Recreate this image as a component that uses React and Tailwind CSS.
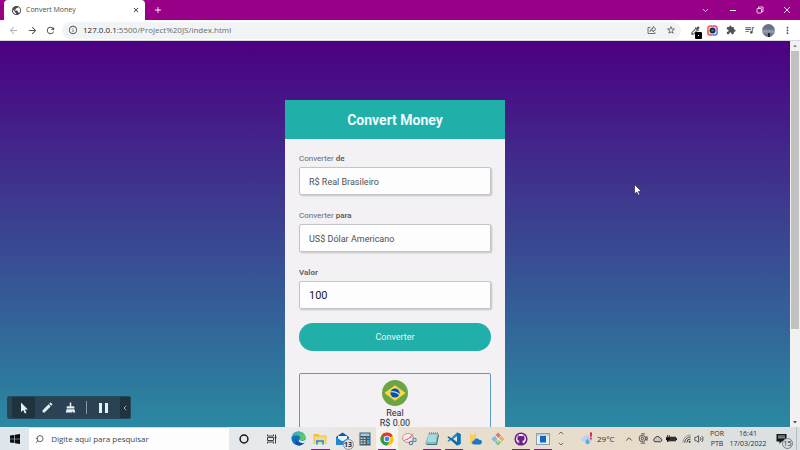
import React from "react";
import {
  MdAdd, MdArrowBack, MdArrowForward, MdClose, MdColorize, MdEdit, MdExtension,
  MdInfoOutline, MdMoreVert, MdPublic, MdQueueMusic, MdRefresh, MdStarBorder,
} from "react-icons/md";
import { ChevronDown, ChevronUp, ChevronLeft, Search, Volume2 } from "lucide-react";

const iconButton = "flex shrink-0 items-center justify-center";

function TitleBar() {
  return (
    <div className="flex h-5 shrink-0 items-center bg-[#980088] text-white">
      <div className="ml-1 flex h-5 w-[141px] items-center rounded-t-[4px] bg-white pr-[5px] pl-[7px] text-[#4a4d51]">
        <MdPublic className="size-[11px]" />
        <span className="ml-1 flex-1 text-[7px] leading-3 text-[#4a4d51]">Convert Money</span>
        <button aria-label="Fechar guia" className={iconButton}>
          <MdClose className="size-2 text-[#222222]" />
        </button>
      </div>
      <button aria-label="Nova guia" className={`${iconButton} ml-2`}>
        <MdAdd className="size-[10px]" />
      </button>
      <div className="ml-auto flex items-center">
        <button aria-label="Pesquisar guias" className={`${iconButton} w-[27px]`}>
          <ChevronDown className="size-[9px]" strokeWidth={2} />
        </button>
        <button aria-label="Minimizar" className={`${iconButton} w-[27px]`}>
          <span className="h-px w-1.5 bg-white" />
        </button>
        <button aria-label="Restaurar" className={`${iconButton} w-[27px]`}>
          <svg viewBox="0 0 8 8" className="size-2" fill="none" stroke="white" strokeWidth="0.8">
            <rect x="1" y="2.5" width="4.5" height="4.5" rx="0.6" />
            <path d="M2.5 2.5V1h4.500v4.500H5.500" />
          </svg>
        </button>
        <button aria-label="Fechar" className={`${iconButton} w-[27px]`}>
          <svg viewBox="0 0 8 8" className="size-2" stroke="white" strokeWidth="0.9">
            <path d="M1 1l6 6M7 1L1 7" />
          </svg>
        </button>
      </div>
    </div>
  );
}

function Toolbar() {
  return (
    <div className="flex h-[21px] shrink-0 items-center border-b border-[#d5d7da] bg-white pr-[7px] pl-[7px] text-[#505458]">
      <button aria-label="Voltar" className={`${iconButton} w-3`}>
        <MdArrowBack className="size-[11px] text-[#b0b3b6]" />
      </button>
      <button aria-label="Avançar" className={`${iconButton} ml-[7px] w-3`}>
        <MdArrowForward className="size-[11px]" />
      </button>
      <button aria-label="Recarregar" className={`${iconButton} ml-1.5 w-3`}>
        <MdRefresh className="size-[11px]" />
      </button>
      <div className="ml-1.5 flex h-[17px] min-w-0 flex-1 items-center rounded-full bg-[#f1f3f4] pr-[5px] pl-1.5">
        <MdInfoOutline className="size-[10px] shrink-0" />
        <span className="ml-[5px] flex-1 text-[8px] leading-3 text-[#686c70]">
          <span className="text-[#26282b]">127.0.0.1</span>:5500/Project%20JS/index.html
        </span>
        <button aria-label="Compartilhar" className={iconButton}>
          <svg viewBox="0 0 10 10" className="size-[10px]" fill="none" stroke="currentColor" strokeWidth="0.8">
            <path d="M3.500 2.500H1v6h7V7.200" />
            <path d="M3 6.500C3.300 4.500 4.500 3.500 6 3.400V1.500L9 4.200 6 6.800V5C4.800 5 3.800 5.400 3 6.500z" />
          </svg>
        </button>
        <button aria-label="Adicionar aos favoritos" className={`${iconButton} ml-[9px]`}>
          <MdStarBorder className="size-[10px]" />
        </button>
      </div>
      <button aria-label="Seletor de cores" className={`${iconButton} relative ml-2 w-[13px]`}>
        <MdColorize className="size-[11px]" />
        <span className="absolute right-0 -bottom-[3px] flex size-[7px] items-center justify-center rounded-[1px] bg-black">
          <span className="size-px bg-white" />
        </span>
      </button>
      <button aria-label="Captura" className={`${iconButton} ml-[5px] w-[11px]`}>
        <svg viewBox="0 0 12 12" className="size-[11px]">
          <rect x="1" y="1" width="10" height="10" rx="2.500" fill="#e9dff0" />
          <path d="M1 5V3.500A2.500 2.500 0 0 1 3.500 1H6" stroke="#ee5a32" strokeWidth="1.600" fill="none" />
          <path d="M6 1h2.500A2.500 2.500 0 0 1 11 3.500V6" stroke="#e13fa5" strokeWidth="1.600" fill="none" />
          <path d="M11 6v2.500A2.500 2.500 0 0 1 8.500 11H6" stroke="#3b8be9" strokeWidth="1.600" fill="none" />
          <path d="M6 11H3.500A2.500 2.500 0 0 1 1 8.500V5" stroke="#e9533b" strokeWidth="1.600" fill="none" />
          <circle cx="6" cy="6" r="3.300" fill="#1e2f45" />
          <circle cx="6" cy="6" r="1.200" fill="#4b78ac" />
        </svg>
      </button>
      <button aria-label="Extensões" className={`${iconButton} ml-2 w-[10px]`}>
        <MdExtension className="size-[10px]" />
      </button>
      <button aria-label="Controles de mídia" className={`${iconButton} ml-2 w-[11px]`}>
        <MdQueueMusic className="size-3" />
      </button>
      <button aria-label="Perfil" className={`${iconButton} ml-[7px]`}>
        <span className="flex size-[13px] flex-col items-center justify-end rounded-full bg-linear-to-b from-[#6b7085] from-35% via-[#92a0b6] via-55% to-[#5a6270]">
          <span className="h-1 w-0.5 bg-[#24262c]" />
        </span>
      </button>
      <button aria-label="Menu" className={`${iconButton} ml-[7px]`}>
        <MdMoreVert className="size-[11px]" />
      </button>
    </div>
  );
}

const fieldClass =
  "block h-7 w-full appearance-none rounded-[2px] border border-[#c3c5c8] bg-[#fdfdfd] px-[9px] shadow-[1px_1px_2px_rgba(0,0,0,0.2)] outline-none";
const selectClass = `${fieldClass} pt-[3px] text-[9px] text-[#505153]`;
const labelClass = "block text-[8px] leading-4 text-[#66676a]";

function BrazilFlag() {
  return (
    <svg viewBox="0 0 26 26" className="size-[26px]" role="img" aria-label="Brasil">
      <circle cx="13" cy="13" r="13" fill="#6da544" />
      <path d="M13 5.200L23.500 13 13 20.800 2.500 13z" fill="#ffda44" />
      <circle cx="13" cy="13" r="4.600" fill="#0052b4" />
      <path d="M8.700 11.500c3.300-.8 6.700.2 8.800 2.700l-.4 1.100c-2-2.600-5.400-3.700-8.700-2.800z" fill="#f0f0f0" />
    </svg>
  );
}

function Converter() {
  return (
    <section className="mt-[59px] w-[220px] shrink-0 bg-[#f3f1f4]">
      <h1 className="flex h-[39px] items-center justify-center bg-[#20afa9] pt-px text-[14px] font-bold text-[#eefaf9]">
        Convert Money
      </h1>
      <form className="px-3.5 pt-3" onSubmit={(e) => e.preventDefault()}>
        <label htmlFor="from" className={labelClass}>
          Converter <b>de</b>
        </label>
        <select id="from" className={selectClass}>
          <option>R$ Real Brasileiro</option>
        </select>
        <label htmlFor="to" className={`${labelClass} mt-[13px]`}>
          Converter <b>para</b>
        </label>
        <select id="to" className={selectClass}>
          <option>US$ Dólar Americano</option>
        </select>
        <label htmlFor="amount" className={`${labelClass} mt-[13px] font-bold`}>
          Valor
        </label>
        <input id="amount" defaultValue="100" className={`${fieldClass} text-[11px] text-[#222222]`} />
        <button className="mt-3.5 block h-7 w-full rounded-full bg-[#20afa9] pt-0.5 text-[9px] text-[#e6f7f6]">
          Converter
        </button>
      </form>
      <div className="mx-3.5 mt-[22px] flex h-24 flex-col items-center rounded-[2px] border border-[#5a9cc0] pt-1.5 text-[9px] leading-[10px] text-[#2b2b2d]">
        <BrazilFlag />
        <p className="mt-0.5">Real</p>
        <p>R$ 0.00</p>
      </div>
    </section>
  );
}

function RecorderBar() {
  return (
    <div className="absolute bottom-2 left-[7px] flex h-[23px] items-stretch overflow-hidden rounded-[2px] border border-[#25495a] bg-[#2b4254] text-[#e6eff3]">
      <button aria-label="Cursor" className={`${iconButton} ml-1 w-[23px] bg-[#1e333d]`}>
        <svg viewBox="0 0 12 12" className="size-3" fill="currentColor">
          <path d="M3 0.500v9.500l2.200-2 1.600 3.500 1.700-.8-1.600-3.300h3z" />
        </svg>
      </button>
      <button aria-label="Caneta" className={`${iconButton} w-6`}>
        <MdEdit className="size-[13px]" />
      </button>
      <button aria-label="Limpar" className={`${iconButton} w-[23px]`}>
        <svg viewBox="0 0 12 12" className="size-[11px]" fill="currentColor">
          <path d="M5.200.5h1.600v4h2.400c.6 0 1 .4 1 1V7H1.800V5.500c0-.6.4-1 1-1h2.400zM1.700 7.800h8.600l.9 3.700H8.500L8 9.800l-.3 1.700H.8z" />
        </svg>
      </button>
      <span className="mx-1 my-1 w-px self-stretch bg-[#8b9aa4]" />
      <button aria-label="Pausar" className={`${iconButton} w-6 gap-[3px]`}>
        <span className="h-[10px] w-[3px] bg-[#e6eff3]" />
        <span className="h-[10px] w-[3px] bg-[#e6eff3]" />
      </button>
      <button aria-label="Recolher" className={`${iconButton} ml-[5px] w-[10px] bg-[#1e333d]`}>
        <ChevronLeft className="size-2" />
      </button>
    </div>
  );
}

function ScrollBar() {
  return (
    <div className="flex w-[10px] shrink-0 flex-col items-center bg-[#f1f1f1]">
      <svg viewBox="0 0 10 10" className="size-[10px]"><path d="M3 6l2-2.500L7 6z" fill="#8a8a8a" /></svg>
      <div className="h-[72%] w-2 bg-[#c1c1c1]" />
      <svg viewBox="0 0 10 10" className="mt-auto size-[10px]"><path d="M3 4l2 2.500L7 4z" fill="#505050" /></svg>
    </div>
  );
}

function EdgeIcon() {
  return (
    <svg viewBox="0 0 16 16" className="size-[15px]">
      <defs>
        <linearGradient id="edgeTop" x1="0" y1="0" x2="1" y2="0.500">
          <stop offset="0" stopColor="#2aa5df" />
          <stop offset="1" stopColor="#5fcf5a" />
        </linearGradient>
      </defs>
      <circle cx="8" cy="8" r="7.500" fill="#176fbf" />
      <path d="M.6 7.500C1 3.500 4.200.5 8 .5c4.400 0 7.500 3 7.500 6.200 0 2.200-1.600 3.600-3.800 3.600-1.600 0-2.400-.6-2.400-1.200 0-.5.6-.7.6-1.800C9.900 5.700 8 4.600 5.800 4.600 3.300 4.600 1.300 6 .6 7.500z" fill="url(#edgeTop)" />
      <path d="M6 6.700c-1.500 2.600.3 6.400 4.600 6.400 1.700 0 3-.7 3.700-1.500.3.300-1.600 3.900-6.300 3.900-2.900-.8-4.800-5.800-2-8.800z" fill="#124a91" />
      <path d="M9.400 9.100c0 1 1.400 1.800 3.200 1.500 1-.2 1.800-.6 2.400-1.300l.5 1.200-1.400 1.900c-2.700 1.100-5.500-.3-5.700-2.600z" fill="#e9edf0" />
    </svg>
  );
}

function ExplorerIcon() {
  return (
    <svg viewBox="0 0 14 14" className="size-[14px]">
      <path d="M.5 2h5l1 1.500h7V12H.5z" fill="#f2bd42" />
      <path d="M1.500 4.500h11V12h-11z" fill="#fbd979" />
      <path d="M3 8h8v4.500H9V10H5v2.500H3z" fill="#3f9ee0" />
    </svg>
  );
}

function MailIcon() {
  return (
    <span className="relative flex">
      <svg viewBox="0 0 16 14" className="h-[14px] w-4">
        <path d="M1 5l6.500-4.500L14 5v8H1z" fill="#155a9c" />
        <path d="M3 4h9v5H3z" fill="#eaf5fc" />
        <path d="M1 5l6.500 4.500L14 5v8H1z" fill="#2586d6" />
      </svg>
      <span className="absolute -right-[3px] -bottom-1 flex size-[11px] items-center justify-center rounded-full border border-[#8d9297] bg-[#dfe2e4] text-[7px] leading-none font-bold text-[#303338]">13</span>
    </span>
  );
}

function CalculatorIcon() {
  return (
    <svg viewBox="0 0 12 14" className="h-[14px] w-3">
      <rect x=".5" y=".5" width="11" height="13" fill="#465b68" />
      <rect x="1.500" y="1.500" width="9" height="2.500" fill="#8fd0ec" />
      <g fill="#c5d3da">
        <path d="M1.500 5.500h2V7h-2zM4.500 5.500h2V7h-2zM1.500 8h2v1.500h-2zM4.500 8h2v1.500h-2zM1.500 10.500h2V12h-2zM4.500 10.500h2V12h-2z" />
      </g>
      <path d="M8 5.500h2.500V7H8zM8 8h2.500v4H8z" fill="#3fa6db" />
    </svg>
  );
}

function ChromeIcon() {
  return (
    <svg viewBox="0 0 16 16" className="size-[14px]">
      <circle cx="8" cy="8" r="7.500" fill="#fbc116" />
      <path d="M8 8L1.500 4.250A7.500 7.500 0 0 1 14.500 4.250z" fill="#e33b2e" />
      <path d="M1.500 4.250A7.500 7.500 0 0 0 8 15.500l3.250-5.600L8 8z" fill="#2a9d48" />
      <circle cx="8" cy="8" r="3.700" fill="#fff" />
      <circle cx="8" cy="8" r="2.800" fill="#4285f4" />
    </svg>
  );
}

function SnipIcon() {
  return (
    <svg viewBox="0 0 16 14" className="h-[14px] w-4" fill="none">
      <ellipse cx="7" cy="6" rx="5.500" ry="4.500" fill="#f5ecec" stroke="#db8d8d" strokeWidth="1" />
      <path d="M12.500 1.500L6 8M3 8.500l9-4" stroke="#c7777a" strokeWidth="0.900" />
      <circle cx="10" cy="11" r="1.700" stroke="#5186b7" strokeWidth="1.100" />
      <circle cx="13.500" cy="8" r="1.700" stroke="#5186b7" strokeWidth="1.100" />
    </svg>
  );
}

function NotepadIcon() {
  return (
    <svg viewBox="0 0 16 14" className="h-[14px] w-4">
      <path d="M5 1h9l-2 11H1z" fill="#7fbcc5" />
      <path d="M5 2.500h8L11.500 10H3z" fill="#a8dae0" />
      <path d="M14 2l1 1-2 10H3l-1-1h10z" fill="#40747e" />
      <path d="M5 1h9" stroke="#4d6c73" strokeWidth="1" strokeDasharray="1 1" />
    </svg>
  );
}

function CodeIcon() {
  return (
    <svg viewBox="0 0 16 16" className="size-[14px]">
      <path d="M11.500.5L15.500 2.300v11.400l-4 1.800L4.500 9 2 11 .5 10.200 3 8 .5 5.800 2 5l2.500 2z" fill="#2489ca" />
      <path d="M11.500 4.500v7L7 8z" fill="#ebe4da" />
      <path d="M11.500.5L15.500 2.300v11.400l-4 1.800z" fill="#1070b3" />
      <path d="M.5 5.800L2 5l9.500 7v3.500z" fill="#0e66a8" />
    </svg>
  );
}

function CloudFileIcon() {
  return (
    <svg viewBox="0 0 14 14" className="size-[14px]">
      <path d="M1 1h6v11H1z" fill="#f7cf61" />
      <path d="M2 1h3v1.500H2z" fill="#fae9b2" />
      <path d="M5 12.500a2 2 0 0 1 .2-4 2.700 2.700 0 0 1 5-.6 2.300 2.300 0 0 1 .8 4.600z" fill="#1878cc" />
    </svg>
  );
}

function GitIcon() {
  return (
    <svg viewBox="0 0 14 14" className="size-[14px]">
      <path d="M7 .5l3 3-3 3-3-3z" fill="#e07b6b" />
      <path d="M3.500 4l3 3-3 3-3-3z" fill="#83b9d9" />
      <path d="M10.500 4l3 3-3 3-3-3z" fill="#e5b460" />
      <path d="M7 7.500l3 3-3 3-3-3z" fill="#87bd73" />
      <path d="M4.500 3.500L10 9M7 6v5" stroke="#f3efe9" strokeWidth="0.9" />
    </svg>
  );
}

function OctocatIcon() {
  return (
    <svg viewBox="0 0 16 16" className="size-[14px]">
      <circle cx="8" cy="8" r="7.500" fill="#6b1f8a" />
      <circle cx="8" cy="8" r="5.700" fill="#f4eef6" />
      <path d="M4.500 3.800l2 1c1-.3 2-.3 3 0l2-1c.3.800.3 1.500.1 2 1 1.400.8 4-2.100 4.600.4.500.5 1 .5 1.600v2.300H6V12c-1.200.2-1.800-.2-2.300-1.200.8.200 1.400.600 2.300.2 0-.2.200-.4.500-.6-2.900-.6-3.100-3.200-2.100-4.600-.2-.5-.2-1.200.1-2z" fill="#6b1f8a" />
    </svg>
  );
}

function WindowIcon() {
  return (
    <svg viewBox="0 0 14 12" className="h-3 w-[14px]">
      <rect x=".5" y=".5" width="13" height="11" fill="#e8eef2" stroke="#8ba0ac" />
      <rect x="4" y="3" width="6" height="6.500" fill="#1665c1" />
      <path d="M1 2h12" stroke="#9db5c3" strokeWidth="1" />
    </svg>
  );
}

const apps = [
  { name: "Edge", icon: <EdgeIcon /> },
  { name: "Explorador", icon: <ExplorerIcon />, open: true },
  { name: "Email", icon: <MailIcon /> },
  { name: "Calculadora", icon: <CalculatorIcon /> },
  { name: "Chrome", icon: <ChromeIcon />, open: true, active: true },
  { name: "Captura", icon: <SnipIcon /> },
  { name: "Bloco de notas", icon: <NotepadIcon />, open: true },
  { name: "Code", icon: <CodeIcon />, open: true },
  { name: "Nuvem", icon: <CloudFileIcon /> },
  { name: "Git", icon: <GitIcon /> },
  { name: "GitHub", icon: <OctocatIcon />, open: true },
  { name: "Gravador", icon: <WindowIcon />, open: true },
];

function SystemTray() {
  return (
    <div className="flex items-center text-[#2d2f31]">
      <svg viewBox="0 0 14 14" className="size-[13px]">
        <path d="M3 10.500a2.500 2.500 0 0 1 .2-5A3.300 3.300 0 0 1 9.500 5a2.800 2.800 0 0 1 .5 5.500z" fill="#b5d3ec" />
        <path d="M7 7l2 3a2.200 2.200 0 1 1-4 0z" fill="#60a6e0" />
        <path d="M9.500.5h2.400l-.5 5h-1.400z" fill="#c7203c" />
        <circle cx="10.700" cy="7" r="1" fill="#c7203c" />
      </svg>
      <span className="ml-[3px] w-[19px] text-[8px] leading-3 whitespace-nowrap">29°C</span>
      <button aria-label="Ícones ocultos" className={`${iconButton} ml-1.5 w-[14px]`}>
        <ChevronUp className="size-[10px]" />
      </button>
      <span className="flex w-[14px] justify-center">
        <svg viewBox="0 0 10 12" className="h-[11px] w-[10px]" fill="none" stroke="currentColor" strokeWidth="0.9">
          <path d="M3 1h4M2.500 11h5" />
          <rect x="1" y="3" width="6.500" height="6" rx="2" />
          <circle cx="4.300" cy="6" r="1.300" />
          <path d="M7.500 5.500L9.500 4v4L7.500 6.500" />
        </svg>
      </span>
      <span className="flex w-[14px] justify-center">
        <svg viewBox="0 0 12 8" className="h-2 w-[11px]" fill="#c9c5be" stroke="currentColor" strokeWidth="1">
          <path d="M3 7a2.200 2.200 0 0 1 .2-4 3.200 3.200 0 0 1 5.800.2A2 2 0 0 1 9.500 7z" />
        </svg>
      </span>
      <span className="flex w-[15px] justify-center">
        <svg viewBox="0 0 12 8" className="h-2 w-[11px]">
          <path d="M3 1.500h8v5H3z" fill="#333" />
          <path d="M11 3h1v2h-1zM0 2h4v3H3v2H1V5H0z" fill="#111" />
          <path d="M1 0h1v2H1zM3 0h1v2H3z" fill="#111" />
        </svg>
      </span>
      <span className="flex w-[14px] justify-center">
        <svg viewBox="0 0 10 10" className="size-[9px]" fill="none" stroke="currentColor" strokeWidth="1">
          <path d="M1 9.500A8.500 8.500 0 0 1 9.500 1" stroke="#8d8b86" />
          <path d="M3 9.500A6.500 6.500 0 0 1 9.500 3.200M5.300 9.500A4.200 4.200 0 0 1 9.500 5.500" />
          <circle cx="8.500" cy="8.700" r="0.700" fill="currentColor" />
        </svg>
      </span>
      <span className="flex w-3 justify-center"><Volume2 className="size-[10px]" /></span>
      <div className="flex w-6 flex-col text-center text-[7px] leading-[10px]">
        <span>POR</span>
        <span>PTB</span>
      </div>
      <div className="flex w-[38px] flex-col text-center text-[7px] leading-[10px] whitespace-nowrap">
        <span>16:41</span>
        <span>17/03/2022</span>
      </div>
      <button aria-label="Notificações" className={`${iconButton} relative ml-2 w-[14px]`}>
        <svg viewBox="0 0 12 12" className="size-3">
          <path d="M.5 1h10v7.500h-5L3.500 11V8.500h-3z" fill="#141517" />
          <path d="M2 3h7M2 4.800h7" stroke="#dfe3e5" strokeWidth="0.800" />
        </svg>
        <span className="absolute -right-1 -bottom-1 flex size-[11px] items-center justify-center rounded-full border border-[#777b7f] bg-[#d9dcde] text-[7px] leading-none text-[#26282b]">15</span>
      </button>
      <span className="ml-[7px] h-[23px] w-px bg-[#b6bcc0]" />
      <span className="w-[3px]" />
    </div>
  );
}

function Taskbar() {
  return (
    <footer className="flex h-[23px] shrink-0 items-stretch bg-linear-[to_right,#dfe6ec_0%,#e8e9ea_40%,#e8dfd0_54%,#e7dcca_80%,#dbe1e3_93%]">
      <button aria-label="Iniciar" className={`${iconButton} w-[29px]`}>
        <svg viewBox="0 0 10 10" className="size-[10px]" fill="#0c0d0e">
          <path d="M0 1.500l4.300-.6v3.800H0zM4.900.8L10 0v4.700H4.900zM0 5.300h4.300v3.800L0 8.500zM4.900 5.300H10V10l-5.100-.8z" />
        </svg>
      </button>
      <label className="flex w-[200px] items-center border-t border-[#d9d9d9] bg-[#fdfdfd] pl-1.5">
        <Search className="size-[10px] -scale-x-100 text-[#333]" />
        <input
          aria-label="Pesquisar"
          placeholder="Digite aqui para pesquisar"
          className="ml-[7px] w-full min-w-0 bg-transparent text-[8px] leading-3 text-[#444] outline-none placeholder:text-[#444648]"
        />
      </label>
      <button aria-label="Cortana" className={`${iconButton} w-[29px]`}>
        <svg viewBox="0 0 10 10" className="size-[10px]">
          <circle cx="5" cy="5" r="3.900" fill="none" stroke="#161718" strokeWidth="1.500" />
        </svg>
      </button>
      <button aria-label="Visão de tarefas" className={`${iconButton} w-[27px]`}>
        <svg viewBox="0 0 10 10" className="size-[10px]" fill="none" stroke="#2b2d2f" strokeWidth="0.9">
          <path d="M.5.500v1.500h6V.5M.5 9.500V8h6v1.500M.5 3.500h6v3h-6zM8.500.5v9" />
          <path d="M7.700 3.500h1.800" strokeWidth="1.600" />
        </svg>
      </button>
      <nav className="ml-0.5 grid w-[267px] grid-cols-12">
        {apps.map((app) => (
          <button
            key={app.name}
            aria-label={app.name}
            className={`relative flex items-center justify-center ${app.active ? "bg-[#f6f3ef]" : ""}`}
          >
            {app.icon}
            {app.open && <span className="absolute inset-x-[2px] bottom-0 h-px bg-[#8c1a80]" />}
          </button>
        ))}
      </nav>
      <div className="ml-[3px] flex flex-col justify-between py-0.5 text-[#3c3d3e]">
        <ChevronUp className="size-2" />
        <ChevronDown className="size-2" />
      </div>
      <div className="ml-auto flex">
        <SystemTray />
      </div>
    </footer>
  );
}

export default function App() {
  return (
    <div className="flex h-screen flex-col overflow-hidden font-['Open_Sans','Noto_Sans',sans-serif]">
      <header className="shrink-0">
        <TitleBar />
        <Toolbar />
      </header>
      <div className="relative flex min-h-0 flex-1">
        <main className="flex min-w-0 flex-1 justify-center overflow-hidden bg-linear-[to_bottom,#4b0082,#20b2aa_502px] font-[Roboto,sans-serif]">
          <Converter />
        </main>
        <ScrollBar />
        <RecorderBar />
        <svg viewBox="0 0 8 12" className="absolute top-[143px] left-[634px] h-3 w-2">
          <path d="M.5.500v9.500L2.800 8l1.500 3.300 1.500-.7L4.400 7.500h3z" fill="#fff" stroke="#1b1238" strokeWidth="0.600" />
        </svg>
      </div>
      <Taskbar />
    </div>
  );
}
